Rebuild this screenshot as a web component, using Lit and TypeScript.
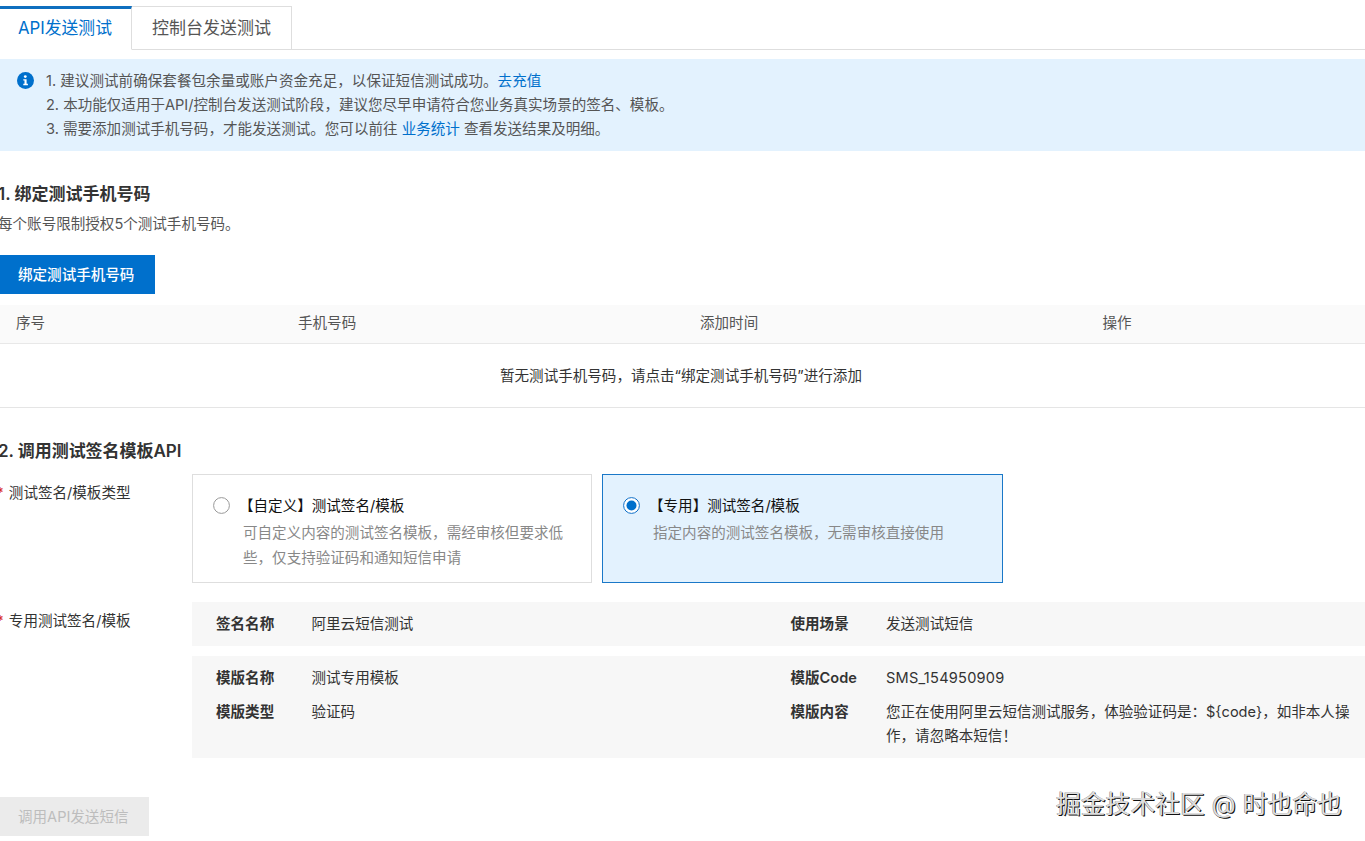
import { LitElement, html, css } from "lit";
import { customElement, property, state } from "lit/decorators.js";
import { classMap } from "lit/directives/class-map.js";

@customElement("option-card")
class OptionCard extends LitElement {
  @property() heading = "";
  @property() description = "";
  @property({ type: Boolean, reflect: true }) checked = false;

  static styles = css`
    :host {
      box-sizing: border-box;
      display: flex;
      gap: 13px;
      width: 400px;
      height: 109px;
      padding: 19px 24px 0 20px;
      border: 1px solid #dedede;
      background: #fff;
      cursor: pointer;
    }
    :host([checked]) {
      width: 401px;
      border-color: #1a78c8;
      background: #e3f2fe;
    }
    .radio {
      flex: none;
      width: 17px;
      height: 17px;
      margin-top: 3px;
    }
    .title {
      color: #111;
      line-height: 24px;
      margin-left: -4px;
    }
    .desc {
      color: #888;
      line-height: 24.3px;
      margin-top: 3px;
    }
  `;

  render() {
    return html`
      <svg class="radio" viewBox="0 0 17 17">
        <circle cx="8.5" cy="8.5" r="7.9" fill="#fff" stroke=${this.checked ? "#1070c8" : "#999"} stroke-width="1"></circle>
        ${this.checked ? html`<svg viewBox="0 0 17 17"><circle cx="8.5" cy="8.5" r="5" fill="#0070cc"></circle></svg>` : ""}
      </svg>
      <div>
        <div class="title">${this.heading}</div>
        <div class="desc">${this.description}</div>
      </div>
    `;
  }
}

@customElement("app-root")
class AppRoot extends LitElement {
  @state() private activeTab = 0;
  @state() private selected = 1;

  private tabs = ["API发送测试", "控制台发送测试"];
  private options = [
    { title: "【自定义】测试签名/模板", desc: "可自定义内容的测试签名模板，需经审核但要求低些，仅支持验证码和通知短信申请" },
    { title: "【专用】测试签名/模板", desc: "指定内容的测试签名模板，无需审核直接使用" },
  ];

  static styles = css`
    :host {
      display: block;
      position: relative;
      box-sizing: border-box;
      width: 1365px;
      height: 841px;
      overflow: hidden;
      padding-top: 6px;
      background: #fff;
      color: #333;
      font: 14.55px/24.3px Inter, "Noto Sans CJK SC", sans-serif;
    }
    .tabs {
      display: flex;
      height: 44px;
      font-size: 17px;
    }
    .tab {
      box-sizing: border-box;
      height: 44px;
      line-height: 43px;
      border: 1px solid #dedede;
      border-left: 0;
      width: 160px;
      padding-left: 20px;
      color: #555;
      white-space: nowrap;
      cursor: pointer;
    }
    .tab.active {
      width: 132px;
      padding-left: 18px;
      line-height: 39px;
      font-size: 16.8px;
      border-top: 3px solid #0e6fbf;
      border-bottom-color: transparent;
      color: #0070cc;
    }
    .rest {
      flex: 1;
      border-bottom: 1px solid #dedede;
    }
    .notice {
      box-sizing: border-box;
      display: flex;
      gap: 12px;
      height: 92px;
      margin-top: 9px;
      padding: 10px 0 0 17px;
      background: #e3f2fe;
      color: #555;
    }
    .notice .line {
      height: 24px;
    }
    .notice .line:first-child {
      letter-spacing: 0.03px;
    }
    .info {
      flex: none;
      width: 17px;
      height: 17px;
      margin-top: 3px;
    }
    a {
      color: #0070cc;
      text-decoration: none;
    }
    h2 {
      margin: 0 0 0 -2px;
      font-size: 17px;
      line-height: 26px;
      font-weight: 600;
      white-space: nowrap;
    }
    .first {
      margin-top: 30px;
    }
    .hint {
      margin: 5px 0 0 -2px;
      color: #555;
    }
    .btn {
      display: block;
      box-sizing: border-box;
      height: 39px;
      border: 0;
      padding: 0 0 0 18px;
      text-align: left;
      font: inherit;
      white-space: nowrap;
    }
    .primary {
      width: 155px;
      margin-top: 19px;
      background: #0070cc;
      color: #fff;
      font-weight: 500;
    }
    .disabled {
      width: 149px;
      margin-top: 39px;
      background: #ebebeb;
      color: #bdbdbd;
    }
    .thead {
      box-sizing: border-box;
      display: grid;
      grid-template-columns: 282px 402px 402.5px 1fr;
      height: 39px;
      margin-top: 11px;
      padding-left: 16px;
      line-height: 37px;
      background: #fafafa;
      border-bottom: 1px solid #e8e8e8;
      color: #555;
    }
    .empty {
      box-sizing: border-box;
      height: 64px;
      line-height: 64px;
      padding-right: 3px;
      text-align: center;
      border-bottom: 1px solid #e5e5e5;
    }
    .second {
      margin-top: 30px;
      letter-spacing: -0.05px;
    }
    .row {
      display: grid;
      grid-template-columns: 192px 1fr;
    }
    .options {
      margin-top: 10px;
    }
    .details {
      margin-top: 19px;
    }
    .label {
      padding-top: 7px;
      margin-left: -4px;
      white-space: nowrap;
    }
    .req {
      color: #d93026;
      font-weight: 600;
      margin-right: 5px;
    }
    .cards {
      display: flex;
      gap: 10px;
    }
    .panel {
      display: grid;
      grid-template-columns: 95.5px 479px 95.5px 1fr;
      row-gap: 9.6px;
      align-content: start;
      box-sizing: border-box;
      padding: 10px 14px 0 24px;
      background: #f7f7f7;
    }
    .sign {
      height: 44px;
    }
    .template {
      height: 102px;
      margin-top: 10px;
    }
    .code {
      letter-spacing: 0.25px;
    }
    b {
      font-weight: 600;
    }
    .watermark {
      position: absolute;
      left: 1056px;
      top: 788px;
      font-size: 24.8px;
      line-height: 32px;
      white-space: nowrap;
      color: #dedede;
      text-shadow: 1px 1px 0.5px #111, -0.5px -0.5px 0.5px #888;
    }
  `;

  render() {
    return html`
      <div class="tabs">
        ${this.tabs.map(
          (t, i) => html`<div class=${classMap({ tab: true, active: i === this.activeTab })}>${t}</div>`
        )}
        <div class="rest"></div>
      </div>
      <div class="notice">
        <svg class="info" viewBox="0 0 17 17">
          <circle cx="8.5" cy="8.5" r="8.5" fill="#0070cc"></circle>
          <circle cx="8.3" cy="4.6" r="1.4" fill="#fff"></circle>
          <path d="M6.3 7.2h3.3v4.6h1.3v1.5H6.3v-1.5h1.2V8.6H6.3z" fill="#fff"></path>
        </svg>
        <div>
          <div class="line">1. 建议测试前确保套餐包余量或账户资金充足，以保证短信测试成功。<a>去充值</a></div>
          <div class="line">2. 本功能仅适用于API/控制台发送测试阶段，建议您尽早申请符合您业务真实场景的签名、模板。</div>
          <div class="line">3. 需要添加测试手机号码，才能发送测试。您可以前往 <a>业务统计</a> 查看发送结果及明细。</div>
        </div>
      </div>
      <h2 class="first">1. 绑定测试手机号码</h2>
      <div class="hint">每个账号限制授权5个测试手机号码。</div>
      <button class="btn primary">绑定测试手机号码</button>
      <div class="thead">
        <span>序号</span><span>手机号码</span><span>添加时间</span><span>操作</span>
      </div>
      <div class="empty">暂无测试手机号码，请点击“绑定测试手机号码”进行添加</div>
      <h2 class="second">2. 调用测试签名模板API</h2>
      <div class="row options">
        <div class="label"><span class="req">*</span>测试签名/模板类型</div>
        <div class="cards">
          ${this.options.map(
            (o, i) => html`<option-card
              .heading=${o.title}
              .description=${o.desc}
              ?checked=${i === this.selected}
              @click=${() => (this.selected = i)}
            ></option-card>`
          )}
        </div>
      </div>
      <div class="row details">
        <div class="label"><span class="req">*</span>专用测试签名/模板</div>
        <div>
          <div class="panel sign">
            <b>签名名称</b><span>阿里云短信测试</span><b>使用场景</b><span>发送测试短信</span>
          </div>
          <div class="panel template">
            <b>模版名称</b><span>测试专用模板</span><b>模版Code</b><span class="code">SMS_154950909</span>
            <b>模版类型</b><span>验证码</span><b>模版内容</b
            ><span>您正在使用阿里云短信测试服务，体验验证码是：\${code}，如非本人操作，请忽略本短信！</span>
          </div>
        </div>
      </div>
      <button class="btn disabled" disabled>调用API发送短信</button>
      <div class="watermark">掘金技术社区 @ 时也命也</div>
    `;
  }
}
